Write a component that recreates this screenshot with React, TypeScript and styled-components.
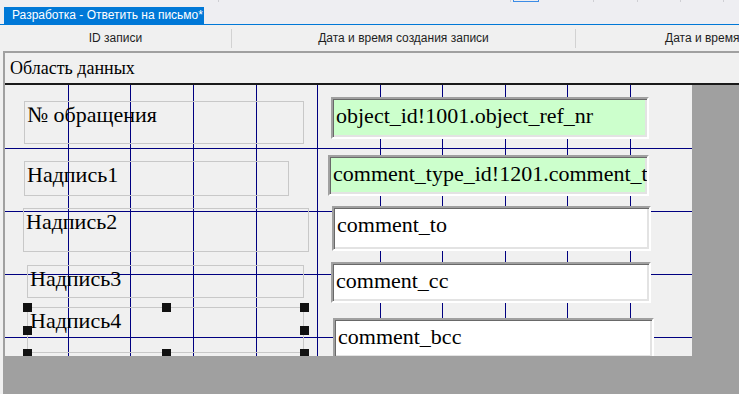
import styled, { createGlobalStyle } from 'styled-components'

const GlobalStyle = createGlobalStyle`
  html, body {
    margin: 0;
    padding: 0;
    background: #f0f0f0;
  }
`

const Page = styled.div`
  width: 739px;
  height: 394px;
  display: flex;
  flex-direction: column;
  background: #f0f0f0;
  overflow: hidden;
  font-family: "Liberation Sans", Arial, sans-serif;
`
const Toolbar = styled.div`
  height: 7px;
  display: flex;
  align-items: flex-start;
  background: #eeeef2;
`
const ToolSlot = styled.div<{ $w: number; $active?: boolean; $plain?: boolean }>`
  width: ${p => p.$w}px;
  flex-shrink: 0;
  height: 2px;
  box-sizing: border-box;
  border-right: ${p => (p.$plain ? 'none' : '1px solid #cfcfd4')};
  ${p => p.$active && `
    border: 1px solid #3c8ce6;
    border-top: none;
  `}
`
const TabBar = styled.div`
  height: 17px;
  display: flex;
  align-items: flex-end;
  padding-left: 4px;
  background: #eeeef2;
  border-bottom: 1px solid #0078d7;
`
const Tab = styled.div`
  height: 17px;
  width: 200px;
  box-sizing: border-box;
  padding-left: 8px;
  background: #0078d7;
  color: #fff;
  font-size: 12px;
  line-height: 17px;
  white-space: nowrap;
`
const HeaderRow = styled.div`
  height: 26px;
  display: flex;
  align-items: center;
  background: #f0f0f0;
`
const HeaderCell = styled.div<{ $w: number; $sep?: boolean; $pad?: number }>`
  width: ${p => p.$w}px;
  flex-shrink: 0;
  height: 19px;
  box-sizing: border-box;
  padding-left: ${p => p.$pad ?? 0}px;
  text-align: ${p => (p.$pad ? 'left' : 'center')};
  font-size: 12px;
  line-height: 19px;
  color: #1e1e1e;
  white-space: nowrap;
  border-right: ${p => (p.$sep ? '1px solid #d2d2d2' : 'none')};
`
const Frame = styled.div`
  flex: 1;
  display: flex;
  flex-direction: column;
  margin-left: 3px;
  border-left: 2px solid #a0a0a0;
  border-top: 2px solid #a0a0a0;
`
const SectionHeader = styled.div`
  height: 30px;
  display: flex;
  align-items: center;
  padding-left: 5px;
  font-family: "Liberation Serif", "Times New Roman", serif;
  font-size: 18px;
  color: #000;
  border-bottom: 2px solid #1a1a1a;
`
const Body = styled.div`
  flex: 1;
  background: #a0a0a0;
`
const Canvas = styled.div`
  position: relative;
  width: 687px;
  height: 271px;
  background: #f0f0f0;
  overflow: hidden;
  font-family: "Liberation Serif", "Times New Roman", serif;
  font-size: 22px;
  color: #000;
`
const Grid = styled.svg`
  position: absolute;
  left: 0;
  top: 0;
`
const Label = styled.div<{ $x: number; $y: number; $w: number; $h: number }>`
  position: absolute;
  left: ${p => p.$x}px;
  top: ${p => p.$y}px;
  width: ${p => p.$w}px;
  height: ${p => p.$h}px;
  box-sizing: border-box;
  border: 1px solid #c8c8c8;
  padding: 0 0 0 2px;
  line-height: 25px;
  white-space: nowrap;
`
const Field = styled.div<{ $x: number; $y: number; $w: number; $h: number; $bound?: boolean }>`
  position: absolute;
  left: ${p => p.$x}px;
  top: ${p => p.$y}px;
  width: ${p => p.$w}px;
  height: ${p => p.$h}px;
  box-sizing: border-box;
  background: ${p => (p.$bound ? '#ccffcc' : '#ffffff')};
  border: 2px solid;
  border-color: #a0a0a0 #ffffff #ffffff #a0a0a0;
  box-shadow: inset 1px 1px 0 #696969, inset -2px -2px 0 #e3e3e3;
  padding: 4px 0 0 3px;
  line-height: 25px;
  white-space: nowrap;
  overflow: hidden;
`
const Handle = styled.div<{ $x: number; $y: number }>`
  position: absolute;
  left: ${p => p.$x - 4}px;
  top: ${p => p.$y - 4}px;
  width: 9px;
  height: 9px;
  background: #111;
`

const VLINES = [63, 125, 188, 251, 312, 375, 437, 500, 562, 625]
const HLINES = [63, 126, 189, 252]

const LABELS = [
  { text: '№ обращения', x: 19, y: 16, w: 280, h: 43 },
  { text: 'Надпись1', x: 19, y: 76, w: 265, h: 35 },
  { text: 'Надпись2', x: 18, y: 123, w: 286, h: 44 },
  { text: 'Надпись3', x: 22, y: 180, w: 277, h: 33 },
  { text: 'Надпись4', x: 22, y: 222, w: 277, h: 46 },
]

const FIELDS = [
  { text: 'object_id!1001.object_ref_nr', x: 326, y: 12, w: 318, h: 42, bound: true },
  { text: 'comment_type_id!1201.comment_t', x: 323, y: 70, w: 321, h: 41, bound: true },
  { text: 'comment_to', x: 327, y: 121, w: 319, h: 45 },
  { text: 'comment_cc', x: 326, y: 177, w: 320, h: 41 },
  { text: 'comment_bcc', x: 328, y: 233, w: 321, h: 41 },
]

const selected = LABELS[4]

export default function App() {
  const { x, y, w, h } = selected
  const handles = [
    [x, y], [x + w / 2, y], [x + w, y],
    [x, y + h / 2], [x + w, y + h / 2],
    [x, y + h], [x + w / 2, y + h], [x + w, y + h],
  ]

  return (
    <>
      <GlobalStyle />
      <Page>
        <Toolbar>
          <ToolSlot $w={219} />
          <ToolSlot $w={292} />
          <ToolSlot $w={2} $plain />
          <ToolSlot $w={26} $active />
          <ToolSlot $w={55} />
          <ToolSlot $w={44} />
          <ToolSlot $w={43} />
          <ToolSlot $w={43} />
        </Toolbar>
        <TabBar>
          <Tab>Разработка - Ответить на письмо*</Tab>
        </TabBar>
        <HeaderRow>
          <HeaderCell $w={232} $sep>ID записи</HeaderCell>
          <HeaderCell $w={344} $sep>Дата и время создания записи</HeaderCell>
          <HeaderCell $w={163} $pad={89}>Дата и время</HeaderCell>
        </HeaderRow>
        <Frame>
          <SectionHeader>Область данных</SectionHeader>
          <Body>
            <Canvas>
              <Grid width={687} height={271} shapeRendering="crispEdges">
                {VLINES.map(v => (
                  <line key={`v${v}`} x1={v + 0.5} y1={0} x2={v + 0.5} y2={271} stroke="#000080" strokeWidth={1} />
                ))}
                {HLINES.map(v => (
                  <line key={`h${v}`} x1={0} y1={v + 0.5} x2={687} y2={v + 0.5} stroke="#000080" strokeWidth={1} />
                ))}
              </Grid>
              {LABELS.map(l => (
                <Label key={l.text} $x={l.x} $y={l.y} $w={l.w} $h={l.h}>{l.text}</Label>
              ))}
              {FIELDS.map(f => (
                <Field key={f.text} $x={f.x} $y={f.y} $w={f.w} $h={f.h} $bound={f.bound}>{f.text}</Field>
              ))}
              {handles.map(([hx, hy]) => (
                <Handle key={`${hx}-${hy}`} $x={hx} $y={hy} />
              ))}
            </Canvas>
          </Body>
        </Frame>
      </Page>
    </>
  )
}
